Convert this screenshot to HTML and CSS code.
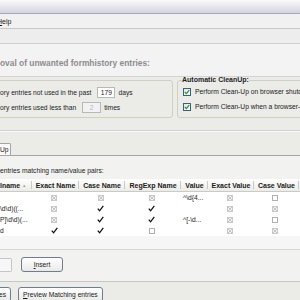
FILE: index.html
```html
<!DOCTYPE html>
<html lang="en">
  <head>
    <meta charset="UTF-8" />
    <title>Form History CleanUp</title>
    <link rel="stylesheet" href="styles.css">
  </head>
  <body>
    <div class="titlebar"></div>
    <div class="menubar">
      <span class="menu"><u>H</u>elp</span>
    </div>
    <div class="toolbar"></div>

    <div class="banner">
      <h1>oval of unwanted formhistory entries:</h1>
    </div>

    <div class="groups">
      <!-- Manual cleanup limits -->
      <div class="group group-left">
        <div class="field-row">
          <span>ory entries not used in the past</span>
          <span class="num-box">179</span>
          <span>days</span>
        </div>
        <div class="field-row row-two">
          <span>ory entries used less than</span>
          <span class="num-box disabled">2</span>
          <span>times</span>
        </div>
      </div>

      <!-- Automatic cleanup options -->
      <fieldset class="group group-right">
        <legend>Automatic CleanUp:</legend>
        <div class="check-row">
          <span class="xp-check"><svg width="6" height="6" viewBox="0 0 6 6"><polyline points="0.8,3 2.4,4.6 5.2,1.2" fill="none" stroke="#21a121" stroke-width="1.3"/></svg></span>
          <span>Perform Clean-Up on browser shutdown</span>
        </div>
        <div class="check-row">
          <span class="xp-check"><svg width="6" height="6" viewBox="0 0 6 6"><polyline points="0.8,3 2.4,4.6 5.2,1.2" fill="none" stroke="#21a121" stroke-width="1.3"/></svg></span>
          <span>Perform Clean-Up when a browser-window is closed</span>
        </div>
      </fieldset>
    </div>

    <div class="sep"></div>

    <div class="tabs">
      <span class="tab">Up</span>
    </div>

    <div class="tabpanel">
      <p class="caption">entries matching name/value pairs:</p>

      <div class="tree">
        <div class="tree-head">
          <span class="th th-name">lname <span class="sort">&#9650;</span></span>
          <span class="th">Exact Name</span>
          <span class="th">Case Name</span>
          <span class="th">RegExp Name</span>
          <span class="th">Value</span>
          <span class="th">Exact Value</span>
          <span class="th">Case Value</span>
          <span class="th th-last"></span>
        </div>
        <div id="tree-rows"></div>
      </div>

      <div class="insert-row">
        <span class="text-box"></span>
        <button class="xp-button insert-btn"><u>I</u>nsert</button>
      </div>
    </div>

    <div class="footer">
      <button class="xp-button cut-btn">es</button>
      <button class="xp-button"><u>P</u>review Matching entries</button>
    </div>

    <script>
      // cleanup rules: name, exact name, case name, regexp name, value, exact value, case value
      // "d" = disabled, "y" = checked, "n" = empty
      const rules = [
        ["", "d", "d", "d", "^\\d{4...", "d", "n"],
        ["\\d\\d)((...", "d", "y", "y", "", "d", "d"],
        ["P]\\d\\d)(...", "d", "y", "y", "^[-\\d...", "d", "n"],
        ["d", "y", "y", "n", "", "d", "d"]
      ];

      function cellFor(state) {
        const cell = document.createElement("span");
        cell.className = "td td-check";
        if (state === "y") {
          cell.innerHTML = '<svg width="7" height="7" viewBox="0 0 7 7"><polyline points="0.8,3.6 2.6,5.8 6.3,0.8" fill="none" stroke="#111" stroke-width="1.3"/></svg>';
        } else {
          const box = document.createElement("span");
          box.className = state === "d" ? "cb cb-dis" : "cb";
          cell.appendChild(box);
        }
        return cell;
      }

      function displayRules() {
        const rowsDiv = document.getElementById("tree-rows");
        rules.forEach((rule) => {
          const row = document.createElement("div");
          row.className = "tree-row";

          const name = document.createElement("span");
          name.className = "td td-name";
          name.textContent = rule[0];
          row.appendChild(name);

          row.appendChild(cellFor(rule[1]));
          row.appendChild(cellFor(rule[2]));
          row.appendChild(cellFor(rule[3]));

          const value = document.createElement("span");
          value.className = "td td-value";
          value.textContent = rule[4];
          row.appendChild(value);

          row.appendChild(cellFor(rule[5]));
          row.appendChild(cellFor(rule[6]));

          const last = document.createElement("span");
          last.className = "td";
          row.appendChild(last);

          rowsDiv.appendChild(row);
        });
      }
      displayRules();
    </script>
  </body>
</html>
```

FILE: styles.css
```css
html {
  height: 100%;
}
body {
  margin: 0;
  padding: 0;
  width: 300px;
  height: 300px;
  overflow: hidden;
  background: #ebebe8;
  font-family: "Liberation Sans", Arial, sans-serif;
  font-size: 6.7px;
  color: #1b1b1b;
  white-space: nowrap;
}

/* Window chrome */
.titlebar {
  height: 13px;
  background: linear-gradient(#fafafc, #d3d5df);
  border-bottom: 1px solid #a7a9b6;
}

.menubar {
  height: 14px;
  display: flex;
  align-items: center;
  background: #f1f1f1;
  border-bottom: 1px solid #c8c8c8;
}

.menu {
  margin-left: -3px;
  font-size: 7px;
}

.toolbar {
  height: 14px;
  background: #ededed;
  border-bottom: 1px solid #d0d0d0;
}

/* Heading band */
.banner {
  height: 33px;
  box-sizing: border-box;
  padding-top: 5px;
  display: flex;
  align-items: center;
  background: #f3f3f3;
  border-bottom: 1px solid #d3d3d3;
}

.banner h1 {
  margin: 0;
  font-size: 8.4px;
  font-weight: bold;
  color: #8d8d8d;
}

/* Group boxes */
.groups {
  display: flex;
  gap: 4px;
  margin-top: -1px;
}

.group {
  box-sizing: border-box;
  margin: 0;
  border: 1px solid #cfcfc2;
  border-radius: 3px;
  min-width: 0;
  overflow: hidden;
}

.group-left {
  width: 185px;
  height: 38px;
  margin-top: 4px;
  margin-left: -12px;
  padding: 6px 4px 0 11px;
}

.group-right {
  flex: 1;
  height: 42px;
  margin-right: -14px;
  padding: 2px 4px 0 4px;
}

.group-right legend {
  padding: 0;
  font-size: 7px;
  line-height: 8px;
  font-weight: bold;
  color: #1e1e1e;
}

.field-row {
  display: flex;
  align-items: center;
  height: 11px;
}

.row-two {
  margin-top: 4px;
}

.num-box {
  box-sizing: border-box;
  width: 18px;
  height: 11px;
  margin: 0 3px 0 6px;
  border: 1px solid #b8b8b8;
  background: #fff;
  text-align: center;
  line-height: 9px;
}

.num-box.disabled {
  width: 19px;
  background: #f2f2f2;
  color: #b5b5b5;
}

.check-row {
  display: flex;
  align-items: center;
  gap: 4px;
  height: 11px;
  margin: 0 0 4px 1px;
}

.xp-check {
  box-sizing: border-box;
  width: 8px;
  height: 8px;
  display: flex;
  align-items: center;
  justify-content: center;
  border: 1px solid #3b5d86;
  background: linear-gradient(135deg, #e3e3df, #ffffff);
}

.sep {
  margin-top: 12px;
  border-top: 1px solid #d2d2d2;
  border-bottom: 1px solid #fafafa;
}

/* Tabs */
.tabs {
  height: 23px;
  display: flex;
  align-items: flex-end;
}

.tab {
  box-sizing: border-box;
  height: 12px;
  padding-right: 1px;
  line-height: 11px;
  background: #fafafa;
  border: 1px solid #a4a4a4;
  border-left: none;
  border-bottom: none;
  border-top-right-radius: 2px;
}

.tabpanel {
  background: #f2f2f0;
  border-top: 1px solid #a4a4a4;
  border-bottom: 1px solid #c6c6c6;
  padding-bottom: 9px;
}

.caption {
  margin: 11px 0 4px;
  line-height: 8px;
}

/* Tree table */
.tree {
  box-sizing: border-box;
  height: 71px;
  margin-left: -20px;
  background: #f6f6f6;
  border-bottom: 1px solid #d6d6d6;
}

.tree-head,
.tree-row {
  display: grid;
  grid-template-columns: 52px 47px 46px 56px 27px 46px 45px 30px;
}

.tree-head {
  height: 13px;
  box-sizing: border-box;
  background: linear-gradient(#ffffff, #ebebe7);
  border-bottom: 1px solid #cbcbc5;
}

.th {
  display: flex;
  align-items: center;
  justify-content: center;
  font-weight: bold;
  font-size: 7px;
  background: linear-gradient(#c9c9c3, #c9c9c3) right 2px / 1px 8px no-repeat;
}

.th-name {
  justify-content: flex-start;
  padding-left: 20px;
}

.sort {
  margin-left: 2px;
  font-size: 4px;
  color: #9a9a9a;
}

.th-last {
  background: none;
}

.tree-row {
  height: 11px;
  background: #fff;
}

.td {
  display: flex;
  align-items: center;
}

.td-name {
  padding-left: 20px;
  overflow: hidden;
}

.td-value {
  padding-left: 2px;
  overflow: hidden;
}

.td-check {
  justify-content: center;
  padding-right: 3px;
}

.cb {
  box-sizing: border-box;
  width: 6px;
  height: 6px;
  border: 1px solid #b0b0b0;
  background: #fff;
}

.cb-dis {
  border-color: #c9c9c9;
  background:
    linear-gradient(45deg, transparent 42%, #c4c4c4 42% 58%, transparent 58%),
    linear-gradient(-45deg, transparent 42%, #c4c4c4 42% 58%, transparent 58%),
    #f4f4f4;
}

/* Insert row */
.insert-row {
  display: flex;
  align-items: center;
  gap: 9px;
  margin-top: 7px;
  height: 15px;
}

.text-box {
  box-sizing: border-box;
  width: 12px;
  height: 14px;
  background: #f7f7f7;
  border: 1px solid #c4c4c4;
  border-left: none;
  border-radius: 0 2px 2px 0;
}

/* XP buttons */
.xp-button {
  box-sizing: border-box;
  height: 15px;
  padding: 0 4px;
  font-family: "Liberation Sans", Arial, sans-serif;
  font-size: 6.7px;
  color: #1b1b1b;
  background: linear-gradient(#ffffff, #e9e9e6);
  border: 1px solid #6f7c91;
  border-radius: 3px;
}

.insert-btn {
  width: 42px;
}

.footer {
  display: flex;
  gap: 7px;
  padding-top: 5px;
}

.cut-btn {
  margin-left: -20px;
  width: 31px;
  text-align: right;
}
```
